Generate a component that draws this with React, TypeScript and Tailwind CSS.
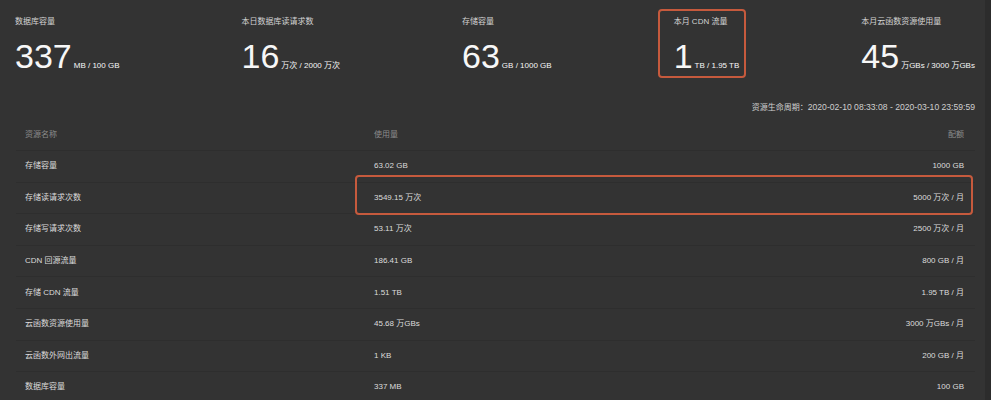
const stats = [
  { label: "数据库容量", value: "337", unit: "MB / 100 GB" },
  { label: "本日数据库读请求数", value: "16", unit: "万次 / 2000 万次" },
  { label: "存储容量", value: "63", unit: "GB / 1000 GB" },
  { label: "本月 CDN 流量", value: "1", unit: "TB / 1.95 TB" },
  { label: "本月云函数资源使用量", value: "45", unit: "万GBs / 3000 万GBs" },
];

const rows = [
  { name: "存储容量", used: "63.02 GB", quota: "1000 GB" },
  { name: "存储读请求次数", used: "3549.15 万次", quota: "5000 万次 / 月" },
  { name: "存储写请求次数", used: "53.11 万次", quota: "2500 万次 / 月" },
  { name: "CDN 回源流量", used: "186.41 GB", quota: "800 GB / 月" },
  { name: "存储 CDN 流量", used: "1.51 TB", quota: "1.95 TB / 月" },
  { name: "云函数资源使用量", used: "45.68 万GBs", quota: "3000 万GBs / 月" },
  { name: "云函数外网出流量", used: "1 KB", quota: "200 GB / 月" },
  { name: "数据库容量", used: "337 MB", quota: "100 GB" },
];

export default function App() {
  return (
    <div className="flex h-[400px] w-[991px] overflow-hidden bg-[#333333] font-['Liberation_Sans','Noto_Sans_CJK_SC',sans-serif]">
      <div className="relative flex-1">
        {/* 统计 */}
        <div className="flex justify-between pl-[15px] pr-[10px] pt-[16px]">
          {stats.map((s) => (
            <Stat key={s.label} {...s} />
          ))}
        </div>
        {/* 标注框 */}
        <div className="absolute left-[658px] top-[9px] h-[69px] w-[88px] rounded-[4px] border-2 border-[#c65a3d]" />

        <div className="mt-[28px] pr-[10px] text-right text-[8px] leading-[12px] text-[#cfcfcf]">
          资源生命周期：<span className="text-[8.6px]">2020-02-10 08:33:08 - 2020-03-10 23:59:59</span>
        </div>

        <div className="relative ml-[16px] mr-[10px] mt-[6px] text-[8px]">
          <div className="grid h-[31px] grid-cols-[349px_1fr_1fr] items-center border-b border-[#2e2e2e] text-[#8c8c8c]">
            <div className="px-[9px]">资源名称</div>
            <div className="px-[9px]">使用量</div>
            <div className="px-[11px] text-right">配额</div>
          </div>
          {rows.map((r) => (
            <div
              key={r.name}
              className="grid h-[31.6px] grid-cols-[349px_1fr_1fr] items-center border-b border-[#2e2e2e] text-[#dcdcdc]"
            >
              <div className="px-[9px]">{r.name}</div>
              <div className="px-[9px]">{r.used}</div>
              <div className="px-[11px] text-right">{r.quota}</div>
            </div>
          ))}
          <div className="absolute left-[339px] top-[55px] h-[40px] w-[618px] rounded-[4px] border-2 border-[#c65a3d]" />
        </div>
      </div>
      <div className="w-[6px] bg-[#2c2c2c]" />
    </div>
  );
}

function Stat({ label, value, unit }: { label: string; value: string; unit: string }) {
  return (
    <div>
      <div className="text-[8px] leading-[12px] text-[#d4d4d4]">{label}</div>
      <div className="mt-[11px] flex items-baseline text-[#f7f7f7]">
        <span className="text-[34px] leading-[34px]">{value}</span>
        <span className="ml-[2px] text-[8px]">{unit}</span>
      </div>
    </div>
  );
}
